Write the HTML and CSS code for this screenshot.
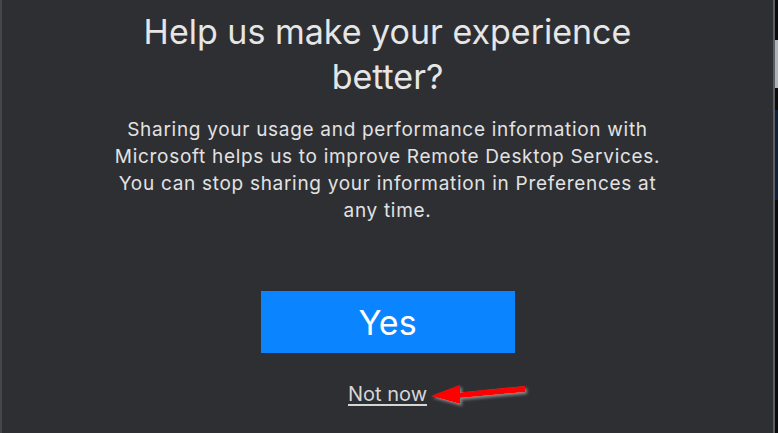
FILE: index.html
```html
<!DOCTYPE html>
<html>
<head>
<meta charset="utf-8">
<link rel="stylesheet" href="styles.css">
</head>
<body>
<div class="page">
  <div class="dialog">
    <h1 class="title">Help us make your experience<br>better?</h1>
    <p class="body-text">Sharing your usage and performance information with<br>Microsoft helps us to improve Remote Desktop Services.<br>You can stop sharing your information in Preferences at<br>any time.</p>
    <button class="yes-btn">Yes</button>
    <a class="not-now" href="#">Not now</a>
    <svg class="arrow" width="110" height="36" viewBox="0 0 110 36">
      <defs>
        <filter id="sh" x="-20%" y="-50%" width="140%" height="200%">
          <feGaussianBlur in="SourceAlpha" stdDeviation="1.5"/>
          <feOffset dx="1.5" dy="2" result="b"/>
          <feFlood flood-color="#9a9a9a" flood-opacity="0.8"/>
          <feComposite in2="b" operator="in"/>
          <feMerge><feMergeNode/><feMergeNode in="SourceGraphic"/></feMerge>
        </filter>
      </defs>
      <path filter="url(#sh)" fill="#ff0000" d="M7 18 L36 7 L36 14.5 L101 8 L101 14 L36 20 L36 26 Z"/>
    </svg>
  </div>
  <div class="backdrop">
    <div class="bd-top"></div>
    <div class="bd-win"></div>
    <div class="bd-gap"></div>
    <div class="bd-blue"></div>
    <div class="bd-rest"></div>
  </div>
</div>
</body>
</html>
```

FILE: styles.css
```css
html, body {
  margin: 0;
  padding: 0;
  background: #0b0b0c;
}

.page {
  display: flex;
  width: 778px;
  height: 433px;
  overflow: hidden;
}

.dialog {
  position: relative;
  flex: 1;
  display: flex;
  flex-direction: column;
  align-items: center;
  background: #2e2f33;
  border-left: 2px solid #46474a;
  border-right: 2px solid #5c5d60;
  font-family: "Inter", "Liberation Sans", sans-serif;
}

.title {
  margin: 9px 0 0;
  font-size: 34px;
  line-height: 45px;
  font-weight: 400;
  color: #e6e6e6;
  text-align: center;
}

.body-text {
  margin: 17px 0 0;
  font-size: 19px;
  letter-spacing: 0.7px;
  line-height: 27px;
  color: #e2e2e2;
  text-align: center;
}

.yes-btn {
  margin-top: 67px;
  width: 254px;
  height: 62px;
  border: 0;
  background: #0a84ff;
  color: #ffffff;
  font-family: inherit;
  font-size: 34px;
  font-weight: 400;
  padding: 0;
}

.not-now {
  margin-top: 29px;
  font-size: 20px;
  line-height: 24px;
  color: #d6d6d6;
  text-decoration: underline;
  text-underline-offset: 3px;
}

.arrow {
  position: absolute;
  left: 422px;
  top: 378px;
}

.backdrop {
  width: 3px;
  display: flex;
  flex-direction: column;
}

.bd-top { height: 40px; background: #0b0b0c; }
.bd-win { height: 48px; background: #aeb3ba; }
.bd-gap { height: 22px; background: #0b0b0c; }
.bd-blue { height: 90px; background: #10203a; }
.bd-rest { flex: 1; background: #0b0b0c; }
```
